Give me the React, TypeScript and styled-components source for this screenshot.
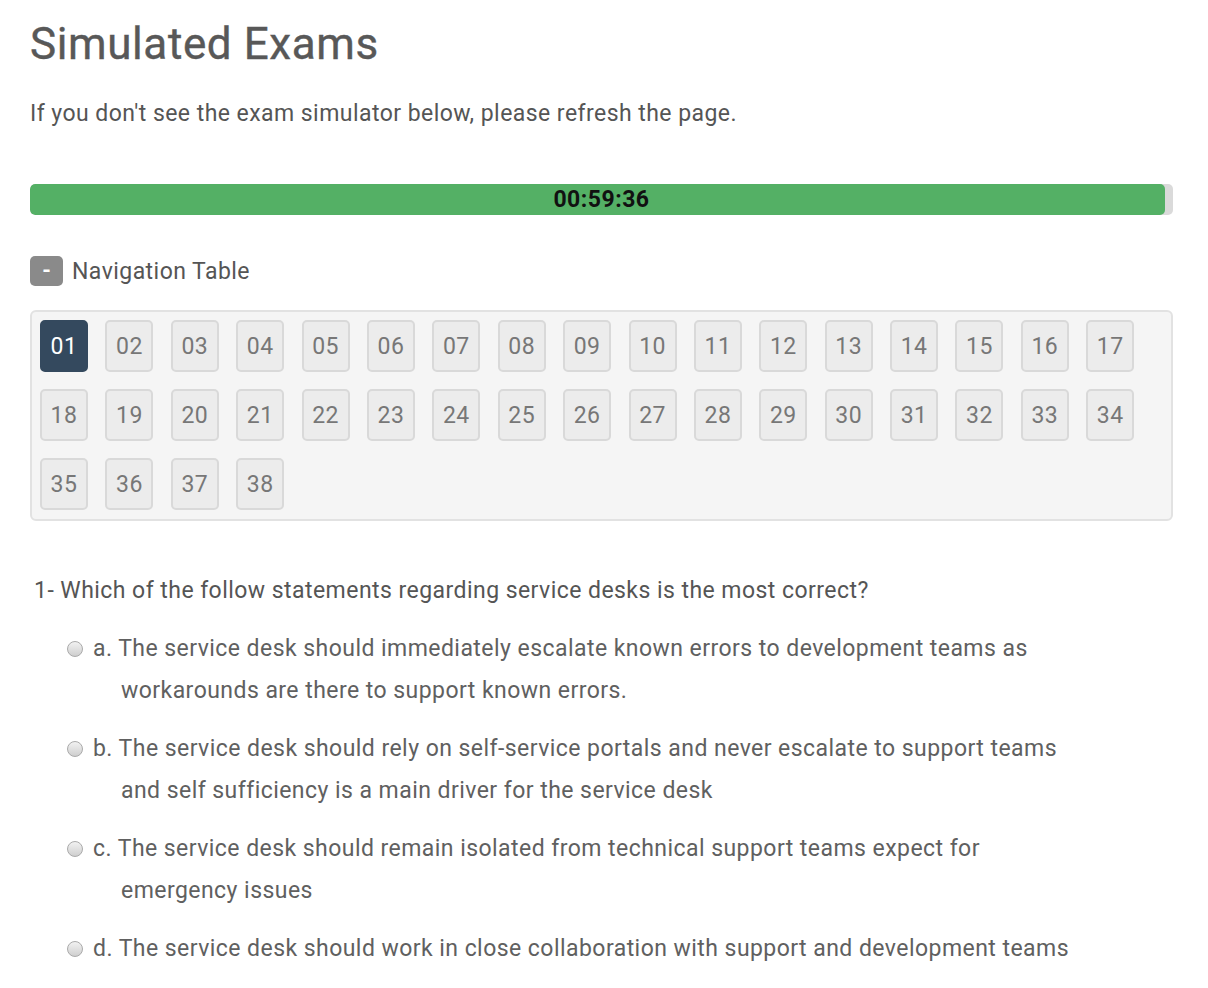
import React from 'react';
import styled, { createGlobalStyle } from 'styled-components';

const GlobalStyle = createGlobalStyle`
  body {
    margin: 0;
    background: #fff;
    font-family: Roboto, "Liberation Sans", Arial, sans-serif;
    letter-spacing: 0.45px;
    color: #555;
  }
`;

const questions = Array.from({ length: 38 }, (_, i) => String(i + 1).padStart(2, '0'));

const options = [
  'a. The service desk should immediately escalate known errors to development teams as workarounds are there to support known errors.',
  'b. The service desk should rely on self-service portals and never escalate to support teams and self sufficiency is a main driver for the service desk',
  'c. The service desk should remain isolated from technical support teams expect for emergency issues',
  'd. The service desk should work in close collaboration with support and development teams',
];

const App: React.FC = () => {
  // time left, as a share of the hour
  const left = (59 * 60 + 36) / 3600;

  return (
    <Page>
      <GlobalStyle />
      <Title>Simulated Exams</Title>
      <Intro>If you don't see the exam simulator below, please refresh the page.</Intro>

      <Progress>
        <ProgressFill style={{ width: `${left * 100}%` }} />
        <Timer>00:59:36</Timer>
      </Progress>

      <NavHeader>
        <ToggleButton>-</ToggleButton>
        <span>Navigation Table</span>
      </NavHeader>

      <NavPanel>
        {questions.map((q, i) => (
          <QButton key={q} $active={i === 0}>{q}</QButton>
        ))}
      </NavPanel>

      <Question>1- Which of the follow statements regarding service desks is the most correct?</Question>

      <OptionList>
        {options.map((o) => (
          <Option key={o}>
            <Radio />
            {o}
          </Option>
        ))}
      </OptionList>
    </Page>
  );
};

const Page = styled.div`
  padding: 0 35px 0 30px;
  width: 1143px;
`;

const Title = styled.h1`
  margin: 0;
  padding-top: 16px;
  font-size: 44px;
  font-weight: 400;
  letter-spacing: 0.6px;
  line-height: 56px;
  color: #585858;
  -webkit-text-stroke: 0.4px #585858;
`;

const Intro = styled.p`
  margin: 29px 0 0;
  font-size: 23px;
  line-height: 26px;
  color: #555;
`;

const Progress = styled.div`
  position: relative;
  margin-top: 57px;
  height: 31px;
  background: #dadada;
  border-radius: 5px;
  overflow: hidden;
`;

const ProgressFill = styled.div`
  height: 100%;
  background: #54b065;
  border-radius: 5px;
`;

const Timer = styled.div`
  position: absolute;
  inset: 0;
  display: flex;
  align-items: center;
  justify-content: center;
  font-size: 23px;
  font-weight: 700;
  letter-spacing: 0.5px;
  color: #111;
`;

const NavHeader = styled.div`
  display: flex;
  align-items: center;
  gap: 9px;
  margin-top: 41px;
  font-size: 23px;
  color: #555;
`;

const ToggleButton = styled.button`
  width: 33px;
  height: 30px;
  padding: 0;
  border: none;
  border-radius: 5px;
  background: #8a8a8a;
  color: #fff;
  font-family: Roboto, "Liberation Sans", Arial, sans-serif;
  font-size: 22px;
  font-weight: 700;
  line-height: 30px;
`;

const NavPanel = styled.div`
  margin-top: 24px;
  display: flex;
  flex-wrap: wrap;
  gap: 17px 17.4px;
  padding: 8px 9px 9px 8px;
  background: #f5f5f5;
  border: 2px solid #e2e2e2;
  border-radius: 6px;
`;

const QButton = styled.div<{ $active?: boolean }>`
  box-sizing: border-box;
  width: 48px;
  height: 52px;
  display: flex;
  align-items: center;
  justify-content: center;
  border-radius: 5px;
  font-size: 23px;
  background: ${(p) => (p.$active ? '#34495e' : '#ececec')};
  color: ${(p) => (p.$active ? '#fff' : '#777')};
  border: 2px solid ${(p) => (p.$active ? '#34495e' : '#d9d9d9')};
`;

const Question = styled.div`
  margin-top: 56px;
  padding-left: 4px;
  font-size: 23px;
  line-height: 28px;
  color: #555;
`;

const OptionList = styled.div`
  margin-top: 23px;
  padding-left: 37px;
  width: 1013px;
`;

const Option = styled.div`
  padding-left: 54px;
  text-indent: -54px;
  font-size: 23px;
  line-height: 42px;
  color: #606060;
  margin-bottom: 16px;
`;

const Radio = styled.span`
  display: inline-block;
  box-sizing: border-box;
  width: 16px;
  height: 16px;
  margin-right: 10px;
  border-radius: 50%;
  border: 1px solid #aaa;
  background: linear-gradient(#f2f2f2, #cfcfcf);
  vertical-align: -1px;
  text-indent: 0;
`;

export default App;
